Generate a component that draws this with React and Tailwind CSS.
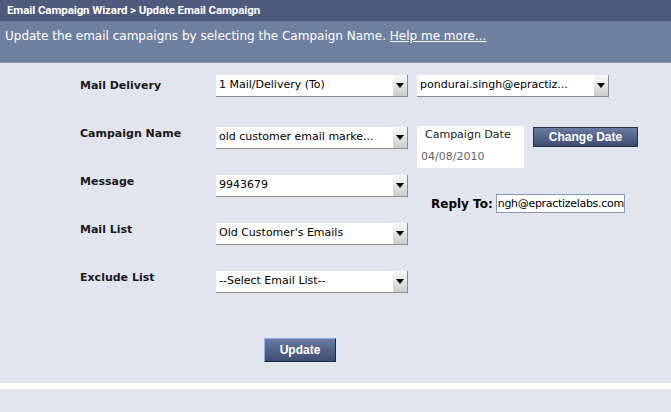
import React from 'react';

const FONT = { fontFamily: '"DejaVu Sans", Verdana, sans-serif' };
const ARIAL = { fontFamily: '"Liberation Sans", Arial, sans-serif' };

function Select({ value, className = '' }) {
  return (
    <div className={`relative flex h-[22px] w-[192px] items-center bg-white border-b border-[#8d8d8d] ${className}`}>
      <span className="flex-1 truncate whitespace-nowrap pl-[3px] text-[11px] text-black">{value}</span>
      <div className="flex h-full w-[15px] items-center justify-center border-r border-[#8d8d8d] bg-gradient-to-b from-[#fbfbfb] to-[#cdcdcd]">
        <svg width="8" height="5" viewBox="0 0 8 5">
          <path d="M0 0 H8 L4 5 Z" fill="#000" />
        </svg>
      </div>
    </div>
  );
}

function Label({ children }) {
  return <div className="w-[136px] shrink-0 text-[11px] font-bold leading-[14px] text-[#1a1a1a]">{children}</div>;
}

export default function App() {
  return (
    <div className="flex h-[412px] w-[671px] flex-col bg-[#e2e5ee]" style={FONT}>
      {/* Header */}
      <div className="h-[21px] shrink-0 bg-[#4e5b7c] px-[7px] text-[11.5px] font-bold leading-[21px] tracking-[-0.1px] text-white" style={{ fontFamily: 'Roboto, "Liberation Sans", sans-serif' }}>
        Email Campaign Wizard &gt; Update Email Campaign
      </div>
      <div className="h-[42px] shrink-0 border-b border-[#8b97b3] bg-[#6f7fa0] px-[5px] pt-[6px] text-[12px] text-white">
        Update the email campaigns by selecting the Campaign Name. <span className="underline">Help me more...</span>
      </div>

      {/* Form */}
      <div className="h-[320px] shrink-0 pl-[80px] pt-[11px]">
        <div className="flex h-[48px] items-start">
          <div className="mt-[5px]"><Label>Mail Delivery</Label></div>
          <Select value="1 Mail/Delivery (To)" className="mt-[1px]" />
          <Select value="pondurai.singh@epractiz..." className="ml-[9px] mt-[1px]" />
        </div>

        <div className="flex h-[48px] items-start">
          <div className="mt-[5px]"><Label>Campaign Name</Label></div>
          <Select value="old customer email marke..." className="mt-[5px]" />
          <div className="ml-[9px] mt-[4px] flex h-[42px] w-[107px] flex-col bg-white pt-[2px]">
            <span className="pl-[8px] text-[11px] leading-[14px] text-[#1a1a1a]">Campaign Date</span>
            <span className="mt-[8px] pl-[4px] text-[11px] leading-[14px] text-[#666]">04/08/2010</span>
          </div>
          <button className="ml-[9px] mt-[5px] h-[20px] w-[105px] border border-[#26304a] bg-gradient-to-b from-[#6a7aa0] to-[#3f4d70] text-[12px] font-bold text-white" style={ARIAL}>
            Change Date
          </button>
        </div>

        <div className="flex h-[48px] items-start">
          <div className="mt-[5px]"><Label>Message</Label></div>
          <Select value="9943679" className="mt-[5px]" />
          <div className="ml-[23px] mt-[24px] flex items-center">
            <span className="text-[12px] font-bold text-black">Reply To:</span>
            <div className="ml-[3px] h-[19px] w-[129px] overflow-hidden whitespace-nowrap border border-[#7f9db9] bg-white pl-[1px] text-[11px] leading-[17px] tracking-[-0.3px] text-black">
              ngh@epractizelabs.com
            </div>
          </div>
        </div>

        <div className="flex h-[48px] items-start">
          <div className="mt-[5px]"><Label>Mail List</Label></div>
          <Select value="Old Customer's Emails" className="mt-[5px]" />
        </div>

        <div className="flex h-[48px] items-start">
          <div className="mt-[5px]"><Label>Exclude List</Label></div>
          <Select value="--Select Email List--" className="mt-[5px]" />
        </div>

        <button className="ml-[184px] mt-[24px] h-[24px] w-[72px] border border-t-[#8fb0f0] border-l-[#8fb0f0] border-b-[#1e2638] border-r-[#1e2638] bg-gradient-to-b from-[#6a7aa0] to-[#3f4d70] text-[12px] font-bold text-white" style={ARIAL}>
          Update
        </button>
      </div>

      <div className="h-[6px] shrink-0 bg-white" />
      <div className="flex-1 bg-[#e2e5ee]" />
    </div>
  );
}
